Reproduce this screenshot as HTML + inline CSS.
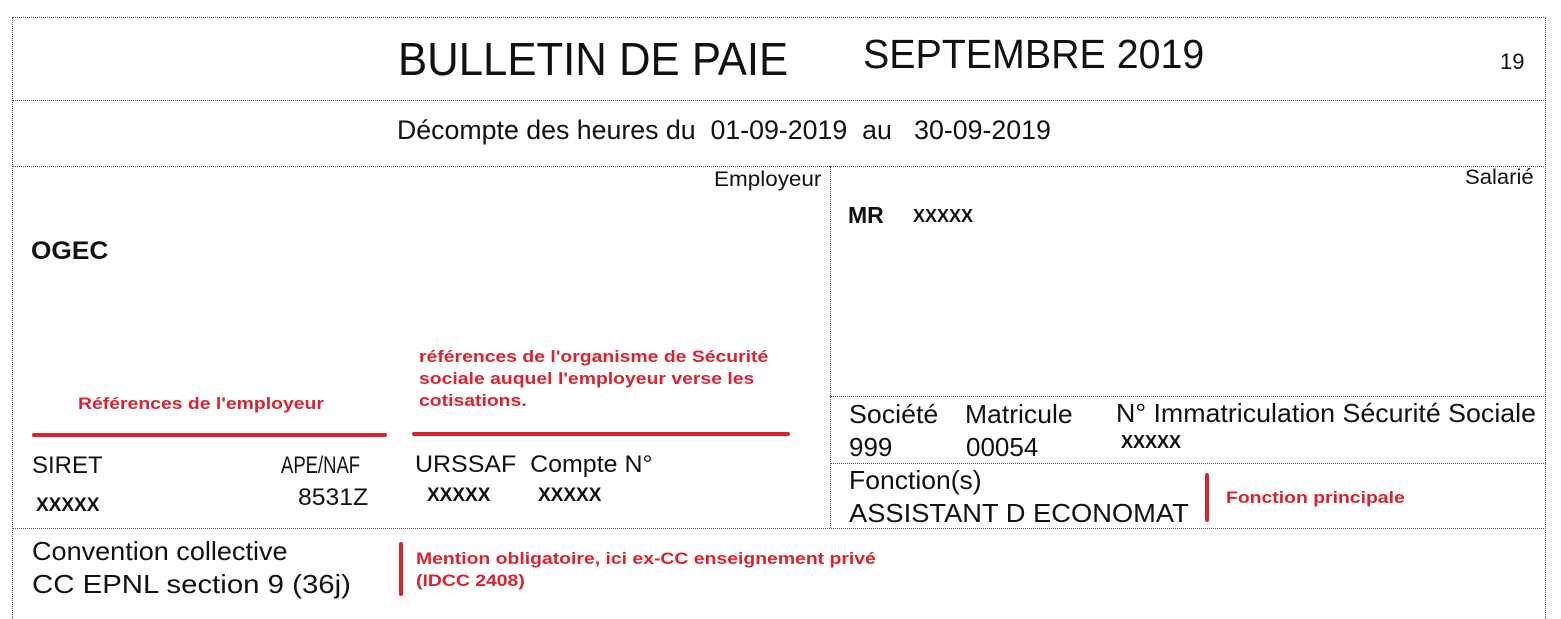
<!DOCTYPE html>
<html><head><meta charset="utf-8"><style>
body{margin:0;width:1561px;height:619px;background:#fff;position:relative;overflow:hidden;font-family:"Liberation Sans",sans-serif;color:#111}
.t{position:absolute;white-space:nowrap;line-height:1;transform-origin:left top}
.b{font-weight:bold}
.r{color:#d9232e;font-weight:bold;font-size:17px;transform:scaleX(1.14);line-height:22px}
.h{position:absolute;border-top:1px dotted #555;height:0}
.v{position:absolute;border-left:1px dotted #555;width:0}
.rl{position:absolute;background:#d9232e;border-radius:2px}
</style></head><body>
<div class="h" style="left:12px;top:17px;width:1534px"></div>
<div class="h" style="left:12px;top:100px;width:1534px"></div>
<div class="h" style="left:12px;top:166px;width:1534px"></div>
<div class="h" style="left:830px;top:396px;width:716px"></div>
<div class="h" style="left:830px;top:463px;width:716px"></div>
<div class="h" style="left:12px;top:528px;width:1534px"></div>
<div class="v" style="left:12px;top:17px;height:602px"></div>
<div class="v" style="left:1545px;top:17px;height:602px"></div>
<div class="v" style="left:830px;top:166px;height:362px"></div>

<div class="t" style="left:398px;top:36px;font-size:46px;transform:scaleX(.95)">BULLETIN DE PAIE</div>
<div class="t" style="left:863px;top:34px;font-size:41px;transform:scaleX(.96)">SEPTEMBRE 2019</div>
<div class="t" style="left:1500px;top:51px;font-size:22px">19</div>
<div class="t" style="left:397px;top:117px;font-size:27px;transform:scaleX(.99)">Décompte des heures du&nbsp; 01-09-2019&nbsp; au&nbsp;&nbsp; 30-09-2019</div>
<div class="t" style="left:714px;top:169px;font-size:21px;transform:scaleX(1.07)">Employeur</div>
<div class="t" style="left:1465px;top:167px;font-size:21px;transform:scaleX(1.05)">Salarié</div>
<div class="t b" style="left:31px;top:239px;font-size:25px;transform:scaleX(1.05)">OGEC</div>
<div class="t b" style="left:848px;top:204px;font-size:23px">MR</div>
<div class="t b" style="left:913px;top:207px;font-size:18px">XXXXX</div>

<div class="t r" style="left:419px;top:346px">références de l'organisme de Sécurité<br>sociale auquel l'employeur verse les<br>cotisations.</div>
<div class="t r" style="left:78px;top:393px">Références de l'employeur</div>
<div class="rl" style="left:32px;top:433px;width:355px;height:4px"></div>
<div class="rl" style="left:412px;top:432px;width:378px;height:4px"></div>

<div class="t" style="left:32px;top:454px;font-size:24px;transform:scaleX(1.0)">SIRET</div>
<div class="t" style="left:281px;top:454px;font-size:24px;transform:scaleX(.77)">APE/NAF</div>
<div class="t b" style="left:36px;top:496px;font-size:19px">XXXXX</div>
<div class="t" style="left:298px;top:486px;font-size:24px;transform:scaleX(1.03)">8531Z</div>
<div class="t" style="left:415px;top:453px;font-size:24px;transform:scaleX(1.04)">URSSAF&nbsp; Compte N°</div>
<div class="t b" style="left:427px;top:486px;font-size:19px">XXXXX</div>
<div class="t b" style="left:538px;top:486px;font-size:19px">XXXXX</div>

<div class="t" style="left:849px;top:401px;font-size:26px;transform:scaleX(1.03)">Société</div>
<div class="t" style="left:965px;top:401px;font-size:26px;transform:scaleX(1.02)">Matricule</div>
<div class="t" style="left:1116px;top:400px;font-size:26px;transform:scaleX(1.03)">N° Immatriculation Sécurité Sociale</div>
<div class="t" style="left:849px;top:434px;font-size:26px;transform:scaleX(1.0)">999</div>
<div class="t" style="left:966px;top:434px;font-size:26px;transform:scaleX(1.0)">00054</div>
<div class="t b" style="left:1121px;top:433px;font-size:18px">XXXXX</div>
<div class="t" style="left:849px;top:467px;font-size:26px;transform:scaleX(1.02)">Fonction(s)</div>
<div class="t" style="left:849px;top:500px;font-size:26px;transform:scaleX(1.05)">ASSISTANT D ECONOMAT</div>
<div class="rl" style="left:1205px;top:473px;width:4px;height:49px"></div>
<div class="t r" style="left:1226px;top:487px">Fonction principale</div>

<div class="t" style="left:32px;top:538px;font-size:26px;transform:scaleX(1.04)">Convention collective</div>
<div class="t" style="left:32px;top:571px;font-size:26px;transform:scaleX(1.13)">CC EPNL section 9 (36j)</div>
<div class="rl" style="left:399px;top:542px;width:4px;height:54px"></div>
<div class="t r" style="left:416px;top:548px">Mention obligatoire, ici ex-CC enseignement privé<br>(IDCC 2408)</div>
</body></html>
